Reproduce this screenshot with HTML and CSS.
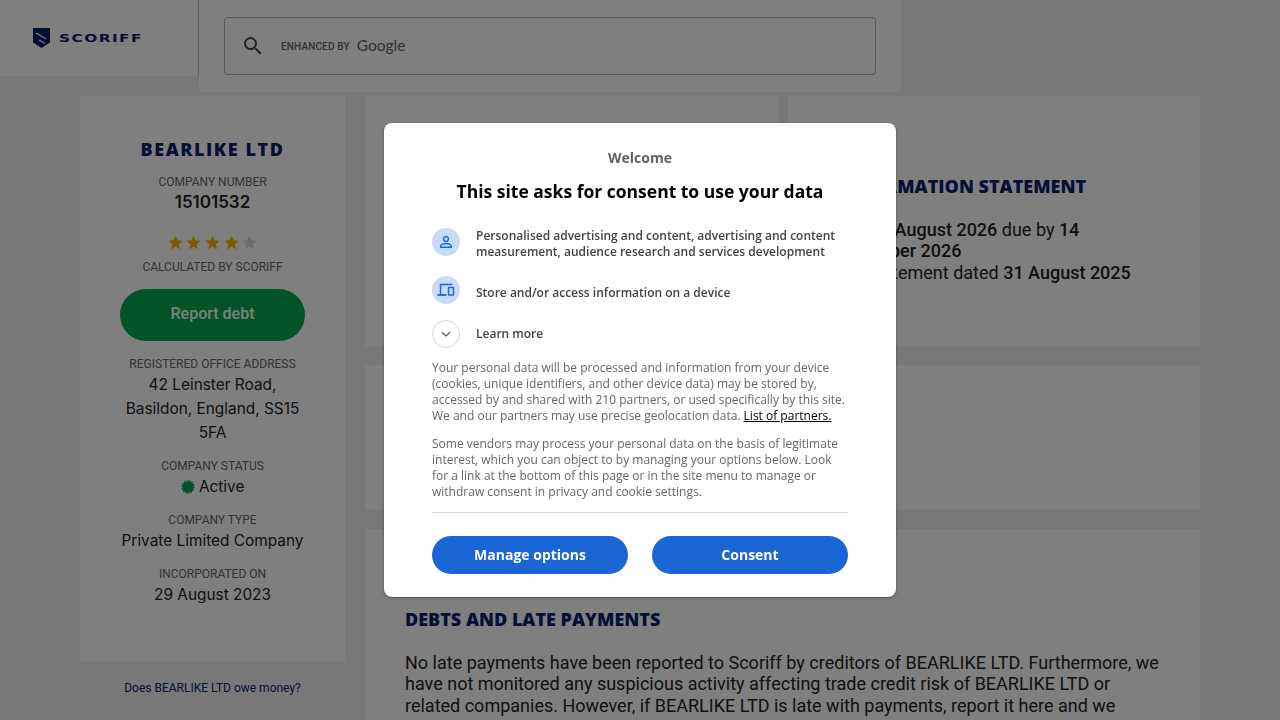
FILE: index.html
```html
<html lang="en">

<head>
    <title>BEARLIKE LTD - Scoriff</title>
    <link rel="stylesheet" href="styles.css">
</head>

<body>
    <header class="top">
        <div class="brand">
            <svg class="shield" width="17" height="20" viewBox="0 0 17 20">
                <path d="M0 0H17V14.500L8.500 20L0 14.500Z" fill="#0b1f6b"/>
                <path d="M3 5L13 10.800M6 12L12 15.500" stroke="#fff" stroke-width="1.200" fill="none"/>
            </svg>
            <span class="brand-name">SCORIFF</span>
        </div>
        <div class="search-panel">
            <div class="search-box">
                <svg width="24" height="24" viewBox="0 0 24 24">
                    <path d="M15.500 14h-.79l-.28-.27A6.470 6.470 0 0 0 16 9.500 6.500 6.500 0 1 0 9.500 16c1.610 0 3.090-.59 4.230-1.570l.27.28v.79l5 4.990L20.490 19l-4.990-5zm-6 0C7.010 14 5 11.990 5 9.500S7.010 5 9.500 5 14 7.010 14 9.500 11.990 14 9.500 14z" fill="#444"/>
                </svg>
                <span class="enhanced">ENHANCED BY</span>
                <span class="google">Google</span>
            </div>
        </div>
    </header>

    <main class="page">
        <aside class="side">
            <section class="card side-card">
                <h1>BEARLIKE LTD</h1>
                <div class="label">COMPANY NUMBER</div>
                <div class="value strong">15101532</div>
                <div class="stars">
                    <svg width="15" height="15" viewBox="0 0 24 24"><path class="on" d="M12 1l3.400 7.300 7.900 1-5.800 5.500 1.500 7.900-7-3.900-7 3.900 1.500-7.900L.7 9.300l7.900-1z"/></svg>
                    <svg width="15" height="15" viewBox="0 0 24 24"><path class="on" d="M12 1l3.400 7.300 7.900 1-5.800 5.500 1.500 7.900-7-3.900-7 3.900 1.500-7.900L.7 9.300l7.900-1z"/></svg>
                    <svg width="15" height="15" viewBox="0 0 24 24"><path class="on" d="M12 1l3.400 7.300 7.900 1-5.800 5.500 1.500 7.900-7-3.900-7 3.900 1.500-7.900L.7 9.300l7.900-1z"/></svg>
                    <svg width="15" height="15" viewBox="0 0 24 24"><path class="on" d="M12 1l3.400 7.300 7.900 1-5.800 5.500 1.500 7.900-7-3.900-7 3.900 1.500-7.900L.7 9.300l7.900-1z"/></svg>
                    <svg width="15" height="15" viewBox="0 0 24 24"><path class="off" d="M12 1l3.400 7.300 7.900 1-5.800 5.500 1.500 7.900-7-3.900-7 3.900 1.500-7.900L.7 9.300l7.900-1z"/></svg>
                </div>
                <div class="label">CALCULATED BY SCORIFF</div>
                <button class="report">Report debt</button>
                <div class="label">REGISTERED OFFICE ADDRESS</div>
                <div class="value">42 Leinster Road, Basildon, England, SS15 5FA</div>
                <div class="label gap">COMPANY STATUS</div>
                <div class="value">
                    <svg class="burst" width="14" height="14" viewBox="0 0 14 14">
                        <circle cx="7" cy="7" r="5.500" fill="#00a651"/>
                        <circle cx="7" cy="7" r="6" fill="none" stroke="#00a651" stroke-width="1.600" stroke-dasharray="1.600 1"/>
                    </svg>
                    Active
                </div>
                <div class="label gap">COMPANY TYPE</div>
                <div class="value">Private Limited Company</div>
                <div class="label gap">INCORPORATED ON</div>
                <div class="value">29 August 2023</div>
            </section>
            <a class="owe" href="#">Does BEARLIKE LTD owe money?</a>
        </aside>

        <div class="content">
            <div class="row-top">
                <section class="card"></section>
                <section class="card statement">
                    <h2>CONFIRMATION STATEMENT</h2>
                    <p>Next <b>31 August 2026</b> due by <b>14 September 2026</b><br>Last statement dated <b>31 August 2025</b></p>
                </section>
            </div>
            <section class="card middle"></section>
            <section class="card debts">
                <h2>DEBTS AND LATE PAYMENTS</h2>
                <p>No late payments have been reported to Scoriff by creditors of BEARLIKE LTD. Furthermore, we have not monitored any suspicious activity affecting trade credit risk of BEARLIKE LTD or related companies. However, if BEARLIKE LTD is late with payments, report it here and we</p>
            </section>
        </div>
    </main>

    <div class="overlay"></div>

    <div class="modal">
        <div class="welcome">Welcome</div>
        <div class="ask">This site asks for consent to use your data</div>

        <div class="purpose first">
            <span class="round">
                <svg width="16" height="16" viewBox="0 0 16 16" fill="none" stroke="#1a66d4" stroke-width="1.400">
                    <circle cx="8" cy="5" r="2.400"/>
                    <path d="M2.700 13.300V12c0-1.500 2.800-2.500 5.300-2.500s5.300 1 5.300 2.500v1.300z"/>
                </svg>
            </span>
            <span class="first-text">Personalised advertising and content, advertising and content measurement, audience research and services development</span>
        </div>
        <div class="purpose second">
            <span class="round">
                <svg width="18" height="16" viewBox="0 0 18 16" fill="none" stroke="#1a66d4" stroke-width="1.500">
                    <path d="M15.500 2.500H3.500V12"/>
                    <path d="M.5 13H9.500" stroke-width="1.800"/>
                    <rect x="11.500" y="5.500" width="5" height="7.500" rx=".6"/>
                </svg>
            </span>
            <span class="second-text">Store and/or access information on a device</span>
        </div>
        <div class="purpose more">
            <span class="round plain">
                <svg width="12" height="12" viewBox="0 0 12 12" fill="none" stroke="#555" stroke-width="1.200">
                    <path d="M2 4.300L6 8L10 4.300"/>
                </svg>
            </span>
            <span>Learn more</span>
        </div>

        <p class="small">Your personal data will be processed and information from your device (cookies, unique identifiers, and other device data) may be stored by, accessed by and shared with 210 partners, or used specifically by this site. We and our partners may use precise geolocation data. <a href="#">List of partners.</a></p>
        <p class="small">Some vendors may process your personal data on the basis of legitimate interest, which you can object to by managing your options below. Look for a link at the bottom of this page or in the site menu to manage or withdraw consent in privacy and cookie settings.</p>

        <div class="actions">
            <button>Manage options</button>
            <button>Consent</button>
        </div>
    </div>
</body>

</html>
```

FILE: styles.css
```css
body {
    margin: 0;
    height: 720px;
    overflow: hidden;
    background: #f0f0f0;
    font-family: 'Roboto', sans-serif;
    color: #222;
}

/* header */
.top {
    display: flex;
    align-items: flex-start;
    height: 76px;
}

.brand {
    display: flex;
    align-items: center;
    gap: 9px;
    box-sizing: border-box;
    width: 199px;
    height: 76px;
    padding-left: 33px;
    background: white;
    border-right: 1px solid #c4c4c4;
}

.brand-name {
    font-family: 'DejaVu Sans', sans-serif;
    font-weight: 700;
    font-size: 11px;
    letter-spacing: 1px;
    color: #0b1f6b;
    transform: scaleX(1.400);
    transform-origin: left center;
}

.search-panel {
    box-sizing: border-box;
    width: 702px;
    height: 92px;
    padding: 17px 25px;
    background: white;
}

.search-box {
    display: flex;
    align-items: center;
    box-sizing: border-box;
    width: 652px;
    height: 58px;
    padding-left: 16px;
    border: 1px solid #b5b5b5;
    border-radius: 4px;
}

.enhanced {
    margin-left: 16px;
    font-size: 10px;
    font-weight: 500;
    letter-spacing: .15px;
    color: #5f6368;
}

.google {
    margin: 0 0 3px 7px;
    font-family: 'Lato', sans-serif;
    font-size: 15.500px;
    color: #5f6368;
}

/* page */
.page {
    display: flex;
    gap: 20px;
    padding: 20px 80px 0;
}

.card {
    background: white;
}

.side {
    width: 265px;
    flex: none;
}

.side-card {
    box-sizing: border-box;
    height: 565px;
    padding: 41px 40px 0;
    text-align: center;
}

h1 {
    margin: 0 0 14px;
    font-family: 'Open Sans', sans-serif;
    font-size: 18px;
    font-weight: 800;
    line-height: 24px;
    letter-spacing: 1.550px;
    color: #0b1f6b;
}

.label {
    font-size: 12px;
    line-height: 14px;
    color: #666;
}

.gap {
    margin-top: 14px;
}

.value {
    margin-top: 2px;
    font-family: 'Inter', sans-serif;
    font-size: 15.400px;
    line-height: 24px;
    color: #222;
}

.strong {
    font-size: 17px;
    font-weight: 600;
    line-height: 22px;
}

.burst {
    vertical-align: -2px;
}

.stars {
    display: flex;
    justify-content: center;
    gap: 3.700px;
    margin-top: 22px;
    margin-bottom: 7px;
    height: 18px;
}

.on {
    fill: #f5b800;
}

.off {
    fill: #d8d8d8;
}

.report {
    display: block;
    width: 185px;
    height: 52px;
    margin: 15px 0 16px;
    padding: 0 0 4px;
    border: none;
    border-radius: 26px;
    background: #00a94a;
    color: white;
    font-family: 'Roboto', sans-serif;
    font-size: 16px;
    font-weight: 500;
}

.owe {
    display: block;
    margin-top: 20px;
    text-align: center;
    font-size: 12px;
    line-height: 14px;
    color: #0b1f6b;
    text-decoration: none;
}

.content {
    flex: 1;
    display: flex;
    flex-direction: column;
    gap: 19px;
}

.row-top {
    display: grid;
    grid-template-columns: 413px 412px;
    gap: 10px;
    height: 250px;
}

.middle {
    height: 145px;
}

h2 {
    margin: 0 0 20.700px;
    font-family: 'Open Sans', sans-serif;
    font-size: 18px;
    font-weight: 800;
    line-height: 24px;
    color: #0b1f6b;
}

.statement {
    padding: 78px 40px 0;
}

.statement p,
.debts p {
    margin: 0;
    font-size: 18px;
    line-height: 21.600px;
    color: #222;
}

.statement b {
    font-weight: 500;
}

.debts {
    height: 191px;
    box-sizing: border-box;
    padding: 78px 40px 0;
}

/* consent dialog */
.overlay {
    position: fixed;
    inset: 0;
    background: rgba(0, 0, 0, .5);
}

.modal {
    position: fixed;
    left: 384px;
    top: 123px;
    box-sizing: border-box;
    width: 512px;
    height: 474px;
    padding: 25px 48px 0;
    background: white;
    border-radius: 8px;
    box-shadow: 0 1px 3px rgba(0, 0, 0, .4);
    font-family: 'Open Sans', sans-serif;
}

.welcome {
    text-align: center;
    font-size: 14px;
    font-weight: 700;
    line-height: 20px;
    color: #5f6368;
}

.ask {
    margin-top: 9px;
    text-align: center;
    font-size: 17.500px;
    font-weight: 700;
    line-height: 28px;
    color: black;
}

.purpose {
    display: flex;
    align-items: center;
    gap: 16px;
    font-size: 12px;
    font-weight: 600;
    line-height: 16px;
    color: #444;
}

.first {
    align-items: flex-start;
    margin-top: 22px;
}

.first .round {
    margin-top: 1px;
}

.first-text {
    padding-top: 1px;
}

.second {
    margin-top: 16px;
}

.second-text {
    padding-top: 6px;
}

.more {
    margin-top: 16px;
    margin-bottom: 12px;
}

.round {
    display: flex;
    align-items: center;
    justify-content: center;
    flex: none;
    width: 28px;
    height: 28px;
    border-radius: 50%;
    background: #c9dcf7;
}

.plain {
    box-sizing: border-box;
    background: white;
    border: 1px solid #d5d5d5;
}

.small {
    margin: 0 0 12px;
    font-size: 12px;
    line-height: 16px;
    color: #666;
}

.small a {
    color: black;
}

.actions {
    display: flex;
    justify-content: space-between;
    padding-top: 23px;
    border-top: 1px solid #d8d8d8;
}

.actions button {
    width: 196px;
    height: 38px;
    padding-bottom: 3px;
    border: none;
    border-radius: 19px;
    background: #1a66d4;
    color: white;
    font-family: 'Open Sans', sans-serif;
    font-size: 14px;
    font-weight: 700;
}
```
